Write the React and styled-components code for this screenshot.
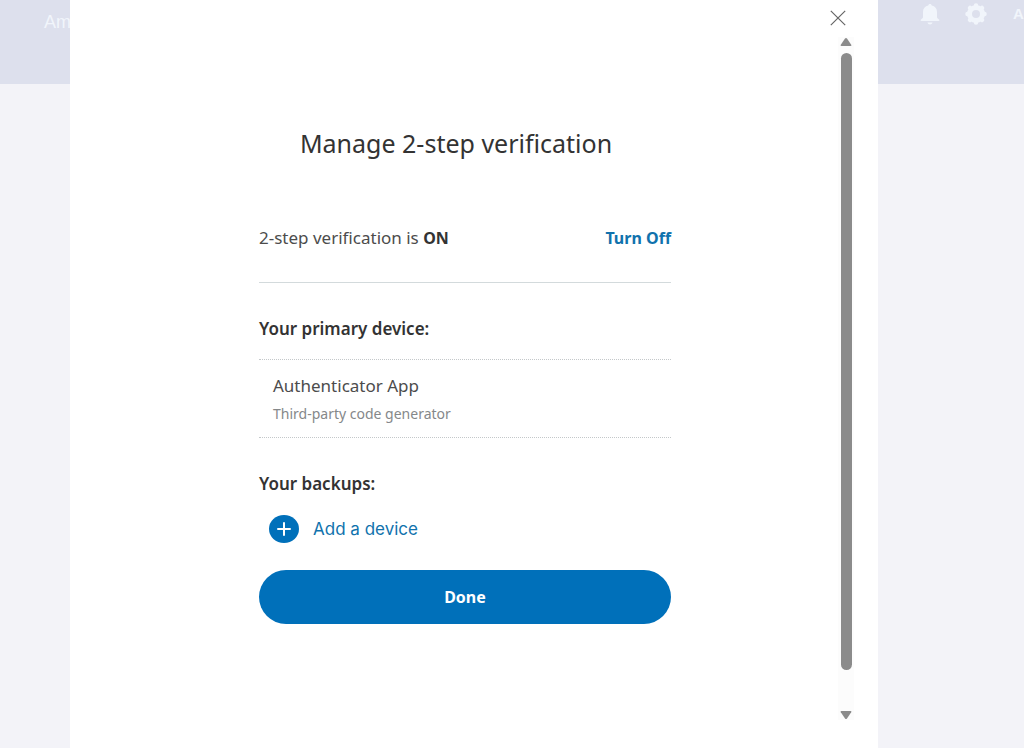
import React from 'react';
import styled, { createGlobalStyle } from 'styled-components';

const GlobalStyle = createGlobalStyle`
  *, *::before, *::after { box-sizing: border-box; }
  body { margin: 0; background: #f3f3f8; font-family: "Noto Sans", "Open Sans", sans-serif; color: #333; }
  h1, h2, p { margin: 0; }
  button { border: 0; padding: 0; background: none; font: inherit; color: inherit; cursor: pointer; }
`;

const Page = styled.div`
  position: relative;
  min-height: 100vh;
  overflow: hidden;
`;

const TopBar = styled.header`
  display: flex;
  justify-content: space-between;
  height: 84px;
  padding-left: 44px;
  background: #dde0ed;
  color: #f1f5fb;
`;

const NavLink = styled.a`
  padding-top: 11px;
  font: 18px/22px "Liberation Sans", Arial, sans-serif;
  color: inherit;
  text-decoration: none;
`;

const Tools = styled.nav`
  display: flex;
  align-items: center;
  gap: 22px;
  width: 106px;
  height: 28px;
  white-space: nowrap;
`;

const ToolButton = styled.button`
  flex: none;
  width: 24px;
  height: 24px;
  svg { display: block; }
`;

const AccountLink = styled.a`
  padding-left: 3px;
  font: 600 15px/20px "Liberation Sans", Arial, sans-serif;
  color: inherit;
  text-decoration: none;
`;

const Overlay = styled.div`
  position: absolute;
  inset: 0;
  display: flex;
  padding: 0 146px 0 70px;
`;

const Dialog = styled.section`
  flex: 1;
  display: flex;
  background: #fff;
`;

const Body = styled.div`
  flex: 1;
  display: flex;
  flex-direction: column;
  align-items: center;
  padding: 123px 0 0 22px;
`;

const Title = styled.h1`
  padding-right: 18px;
  font-size: 25px;
  line-height: 40px;
  font-weight: 400;
`;

const Form = styled.div`
  width: 412px;
  max-width: 100%;
`;

const StatusRow = styled.div`
  display: flex;
  justify-content: space-between;
  align-items: center;
  margin-top: 61px;
  padding-bottom: 30px;
  border-bottom: 1px solid #d3dadc;
  font-size: 17px;
  line-height: 28px;
  color: #4c4c4c;
  strong { color: #333; font-size: 16px; font-weight: 700; }
`;

const TextButton = styled.button`
  color: #1072ad;
  font-size: 16px;
  font-weight: 700;
`;

const SectionTitle = styled.h2`
  margin-top: 32px;
  font-size: 17px;
  line-height: 28px;
  font-weight: 600;
`;

const Device = styled.div`
  margin-top: 16px;
  padding: 12px 14px 9px;
  border: dotted #c4c8ca;
  border-width: 1px 0;
`;

const DeviceName = styled.p`
  font-size: 17px;
  line-height: 28px;
  color: #4c4c4c;
`;

const DeviceNote = styled.p`
  font-size: 14px;
  line-height: 28px;
  color: #85888a;
`;

const AddButton = styled.button`
  display: flex;
  align-items: center;
  gap: 14px;
  margin: 16px 0 0 10px;
  font: 17px/30px Inter, "Liberation Sans", sans-serif;
  color: #1072ad;
`;

const DoneButton = styled.button`
  display: block;
  width: 100%;
  height: 54px;
  margin-top: 26px;
  border-radius: 27px;
  background: #0070ba;
  color: #fff;
  font-size: 16px;
  font-weight: 700;
`;

const Rail = styled.div`
  display: flex;
  flex-direction: column;
  align-items: center;
  width: 16px;
  margin-right: 24px;
  padding: 10px 0 28px;
`;

const CloseButton = styled.button`
  align-self: flex-start;
  width: 16px;
  height: 16px;
  margin: 0 0 11px -8px;
  svg { display: block; }
`;

const Track = styled.div`
  flex: 1;
  display: flex;
  width: 100%;
  flex-direction: column;
  align-items: center;
  background: #fcfcfc;
`;

const Thumb = styled.div`
  flex: 1;
  width: 11px;
  margin: 6px 0 40px;
  border-radius: 6px;
  background: #8b8b8b;
`;

const Arrow = ({ down }) => (
  <svg width="12" height="10" viewBox="0 0 12 10" aria-hidden="true">
    <path
      d={down
        ? 'M1.5 1h9Q12 1 11.2 2.300L7 8.400q-1 1.200-2 0L.8 2.300Q0 1 1.500 1Z'
        : 'M1.5 9h9Q12 9 11.2 7.700L7 1.600q-1-1.200-2 0L.8 7.700Q0 9 1.500 9Z'}
      fill="#8b8b8b"
    />
  </svg>
);

export default function App() {
  return (
    <Page>
      <GlobalStyle />
      <TopBar>
        <NavLink href="#activity">Am</NavLink>
        <Tools aria-label="Account">
          <ToolButton aria-label="Notifications">
            <svg width="24" height="24" viewBox="0 0 24 24" fill="currentColor">
              <path d="M12 2c1 0 1.700.7 1.700 1.500C17 4.300 19 6.500 19 10v5c0 1 .6 1.600 2 2.500.8.500.5 1.500-.5 1.500h-17c-1 0-1.300-1-.5-1.500 1.400-.9 2-1.500 2-2.500v-5c0-3.500 2-5.700 5.300-6.500C10.300 2.700 11 2 12 2ZM9.500 20.500h5c-.3 1.300-1.200 2-2.500 2s-2.200-.7-2.500-2Z" />
            </svg>
          </ToolButton>
          <ToolButton aria-label="Settings">
            <svg width="24" height="24" viewBox="0 0 24 24" fill="none" stroke="currentColor">
              <circle cx="12" cy="12" r="6.500" strokeWidth="5" />
              <path
                d="M12 3.500V4M18 6l-.3.300M20.500 12H20M18 18l-.3-.3M12 20.500V20M6 18l.3-.3M3.500 12H4M6 6l.3.300"
                strokeWidth="4.500"
                strokeLinecap="round"
              />
            </svg>
          </ToolButton>
          <AccountLink href="#account">A</AccountLink>
        </Tools>
      </TopBar>

      <Overlay>
        <Dialog role="dialog" aria-modal="true" aria-labelledby="dialog-title">
          <Body>
            <Title id="dialog-title">Manage 2-step verification</Title>
            <Form>
              <StatusRow>
                <p>2-step verification is <strong>ON</strong></p>
                <TextButton>Turn Off</TextButton>
              </StatusRow>
              <SectionTitle>Your primary device:</SectionTitle>
              <Device>
                <DeviceName>Authenticator App</DeviceName>
                <DeviceNote>Third-party code generator</DeviceNote>
              </Device>
              <SectionTitle>Your backups:</SectionTitle>
              <AddButton>
                <svg width="30" height="30" viewBox="0 0 30 30" aria-hidden="true">
                  <ellipse cx="15" cy="15" rx="15" ry="14" fill="#0070ba" />
                  <path d="M9 15h12M15 9v12" stroke="#fff" strokeWidth="2" strokeLinecap="round" />
                </svg>
                Add a device
              </AddButton>
              <DoneButton>Done</DoneButton>
            </Form>
          </Body>
          <Rail>
            <CloseButton aria-label="Close">
              <svg width="16" height="16" viewBox="0 0 16 16" stroke="#666" strokeWidth="1.200">
                <path d="M.8.8l14.400 14.400M15.200.8.8 15.200" />
              </svg>
            </CloseButton>
            <Track>
              <Arrow />
              <Thumb />
              <Arrow down />
            </Track>
          </Rail>
        </Dialog>
      </Overlay>
    </Page>
  );
}
